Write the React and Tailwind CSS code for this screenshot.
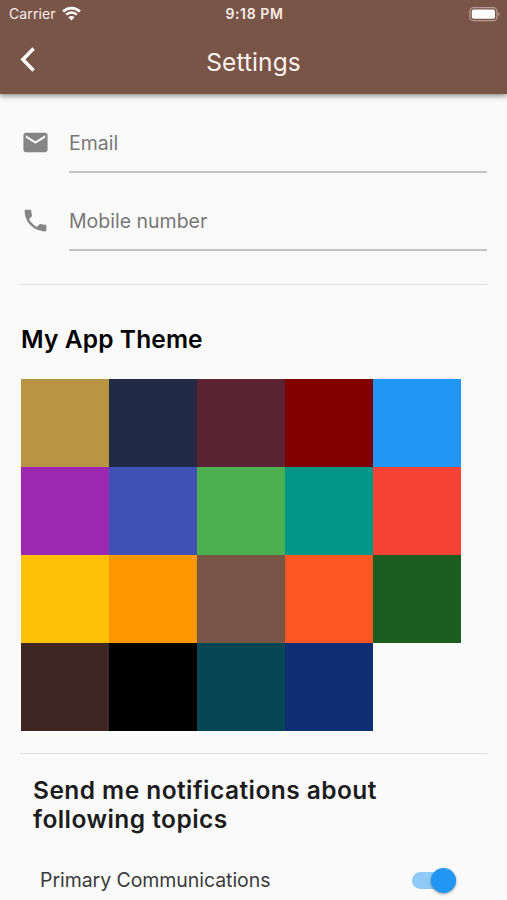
import React, { useState } from "react";
import { MdEmail, MdPhone } from "react-icons/md";

const themeColors = [
  "#b89443", "#202a44", "#5b2333", "#800000", "#2196f3",
  "#9c27b0", "#3f51b5", "#4caf50", "#009688", "#f44336",
  "#ffc107", "#ff9800", "#795548", "#ff5722", "#1b5e20",
  "#3e2723", "#000000", "#044654", "#0f2d75",
];

const StatusBar = () => (
  <div className="grid h-7 grid-cols-3 items-center pl-[9px] pr-[7px] text-[#fbeee8]">
    <div className="flex items-center gap-1.5 text-[14px] leading-none tracking-[0.1px]">
      <span className="w-[47px] whitespace-nowrap">Carrier</span>
      <svg className="mb-0.5 h-[15px] w-[19px] text-white" viewBox="0 0 19 15" fill="none" stroke="currentColor">
        <path d="M1.1 5.5C5.9 .9 13.1 .9 17.9 5.5" strokeWidth="2.8" />
        <path d="M4.2 8.7c3-2.9 7.6-2.9 10.6 0" strokeWidth="2.4" />
        <path d="M9.5 14.4 6.4 11.2c1.7-1.7 4.5-1.7 6.2 0z" fill="currentColor" stroke="none" />
      </svg>
    </div>
    <div className="whitespace-nowrap text-center text-[14px] font-semibold leading-none tracking-[0.6px]">9:18 PM</div>
    <svg className="h-[15px] w-[31px] justify-self-end" viewBox="0 0 31 15">
      <rect x=".9" y=".7" width="27" height="13" rx="3.8" fill="none" stroke="#b79b92" strokeWidth="1.3" />
      <rect x="2.8" y="2.6" width="23.2" height="9.2" rx="1.8" fill="#fff" />
      <path d="M29.2 5c1.8.8 1.8 3.6 0 4.4z" fill="#b79b92" />
    </svg>
  </div>
);

const Header = () => (
  <header className="relative h-[94px] bg-[#795548] shadow-[0_2px_5px_rgba(0,0,0,0.45)]">
    <StatusBar />
    <div className="grid h-[66px] grid-cols-[60px_1fr_60px] items-center">
      <button aria-label="Back" className="pb-[3px] pl-5">
        <svg className="h-[25px] w-4" viewBox="0 0 16 25" fill="none" stroke="#fff" strokeWidth="3.5">
          <path d="M13.6 1.6 2.9 12.5l10.7 10.9" />
        </svg>
      </button>
      <h1 className="pt-0.5 text-center text-[24.5px] leading-none tracking-[0.1px] text-[#fdf3ee]">Settings</h1>
    </div>
  </header>
);

const Field = ({ icon: Icon, label }) => (
  <div className="flex h-[59px]">
    <Icon className="ml-[0.5px] mt-[14px] size-[29px] shrink-0 text-[#858585]" />
    <input
      aria-label={label}
      placeholder={label}
      className="ml-[19.5px] min-w-0 flex-1 border-b-2 border-[#c2c2c2] bg-transparent pt-0.5 text-[19.5px] outline-none placeholder:text-[#777]"
    />
  </div>
);

const Toggle = ({ label }) => {
  const [on, setOn] = useState(true);

  return (
    <div className="flex h-10 items-center justify-between pl-5 pr-[31px]">
      <span className="pt-0.5 text-[19.5px] leading-none tracking-[-0.06px] text-[#3a3a3a]">{label}</span>
      <button
        role="switch"
        aria-checked={on}
        onClick={() => setOn(!on)}
        className={`flex h-[17px] w-11 items-center rounded-full ${on ? "justify-end bg-[#90caf9]" : "bg-gray-400"}`}
      >
        <span className={`size-[25px] shrink-0 rounded-full shadow-[0_1px_3px_rgba(0,0,0,0.4)] ${on ? "bg-[#2196f3]" : "bg-white"}`} />
      </button>
    </div>
  );
};

const App = () => {
  return (
    <div className="h-[900px] w-full overflow-hidden bg-[#fafafa] font-['Inter',sans-serif]">
      <Header />
      <main className="px-5 pt-5">
        <div className="flex flex-col gap-[19px]">
          <Field icon={MdEmail} label="Email" />
          <Field icon={MdPhone} label="Mobile number" />
        </div>
        <hr className="mt-[33px] border-[#dedede]" />

        <h2 className="mt-[39px] pl-px text-[24.5px] font-semibold leading-[30px] tracking-[0.13px] text-black">My App Theme</h2>
        <div className="ml-[0.5px] mt-[25px] grid w-[440px] grid-cols-5">
          {themeColors.map((color) => (
            <button key={color} aria-label={color} className="h-[88px]" style={{ backgroundColor: color }} />
          ))}
        </div>
        <hr className="mt-[22px] border-[#dedede]" />

        <h2 className="mt-[22px] w-[380px] pl-[13px] text-[24.5px] font-semibold leading-[29px] tracking-[0.45px] text-[#1c1c1c]">
          Send me notifications about following topics
        </h2>
        <div className="mt-[26px]">
          <Toggle label="Primary Communications" />
        </div>
      </main>
    </div>
  );
};

export default App;
